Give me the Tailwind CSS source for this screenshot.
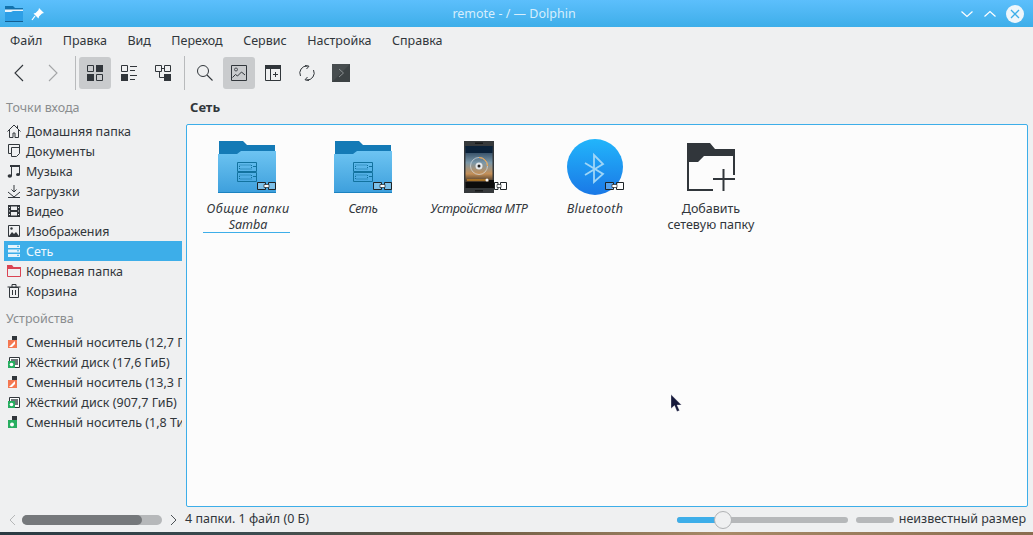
<!DOCTYPE html>
<html lang="ru">
<head>
<meta charset="utf-8">
<script src="https://cdn.jsdelivr.net/npm/@tailwindcss/browser@4"></script>
<title>remote - / — Dolphin</title>
</head>
<body class="w-[1033px] h-[535px] overflow-hidden bg-[#eff0f1] font-['Noto_Sans',sans-serif] text-[12.5px] text-[#31363b]">
<div class="relative flex flex-col h-[532px] bg-[#eff0f1]">
  <!-- title bar -->
  <div class="relative flex items-center h-[27px] bg-gradient-to-b from-[#5cbffc] to-[#3daee9]">
    <svg class="ml-[4px]" width="20" height="18" viewBox="0 0 20 18"><path d="M1 1h8l2 2h8v13H1z" fill="#1272ad"/><path d="M1 4.500h18V7H1z" fill="#e8f4fc"/><path d="M1 7h6l2-1h10v11H1z" fill="#2d9fe6"/><path d="M1 16h18v1H1z" fill="#135f92"/></svg>
    <svg class="ml-[7px]" width="14" height="14" viewBox="0 0 14 14"><path d="M8 1l5 5-2 .5L8 9.500l-.5 2-5-5 2-.5L7.500 3z" fill="#fff"/><path d="M4 9l-3 4" stroke="#fff" stroke-width="1.200"/></svg>
    <span class="absolute left-0 right-[5px] text-center text-[#d6eefc] leading-[27px]">remote - / — Dolphin</span>
    <div class="ml-auto flex items-center gap-[9px] mr-[9px]">
      <svg width="14" height="10" viewBox="0 0 14 10"><path d="M1.500 2.500L7 7.500l5.500-5" fill="none" stroke="#fff" stroke-width="1.200"/></svg>
      <svg width="14" height="10" viewBox="0 0 14 10"><path d="M1.500 7.500L7 2.500l5.500 5" fill="none" stroke="#fff" stroke-width="1.200"/></svg>
      <svg width="18" height="18" viewBox="0 0 18 18"><circle cx="9" cy="9" r="9" fill="#eef6fb"/><path d="M5 5l8 8M13 5l-8 8" stroke="#3daee9" stroke-width="1.300"/></svg>
    </div>
  </div>
  <!-- menu -->
  <div class="flex items-center gap-[20.5px] h-[27px] pl-[10px] leading-[27px]">
    <span>Файл</span><span>Правка</span><span>Вид</span><span>Переход</span><span>Сервис</span><span>Настройка</span><span>Справка</span>
  </div>
  <!-- toolbar -->
  <div class="flex items-start gap-[2px] h-[39px] pl-[3px] pt-[3px]">
    <div class="w-8 h-8 flex items-center justify-center"><svg width="12" height="18" viewBox="0 0 12 18"><path d="M10 1L2 9l8 8" fill="none" stroke="#31363b" stroke-width="1.100"/></svg></div>
    <div class="w-8 h-8 flex items-center justify-center"><svg width="12" height="18" viewBox="0 0 12 18"><path d="M2 1l8 8-8 8" fill="none" stroke="#a3a5a7" stroke-width="1.100"/></svg></div>
    <div class="w-px h-[34px] -mt-px bg-[#b8babc] ml-[4px] mr-[1px]"></div>
    <div class="w-8 h-8 flex items-center justify-center bg-[#c9cbcd] rounded-[3px]"><svg width="16" height="16" viewBox="0 0 16 16"><path d="M.500.500h6v6h-6zM9.500 9.500h6v6h-6z" fill="none" stroke="#31363b"/><path d="M9 0h7v7H9zM0 9h7v7H0z" fill="#31363b"/></svg></div>
    <div class="w-8 h-8 flex items-center justify-center"><svg width="16" height="16" viewBox="0 0 16 16"><path d="M.500.500h6v6h-6z" fill="none" stroke="#31363b"/><path d="M0 9h7v7H0z" fill="#31363b"/><path d="M9 1h7v1H9zM9 5h5v1H9zM9 10h7v1H9zM9 14h5v1H9z" fill="#31363b"/></svg></div>
    <div class="w-8 h-8 flex items-center justify-center"><svg width="16" height="16" viewBox="0 0 16 16"><path d="M.500.500h6v6h-6zM9.500.500h6v6h-6z" fill="none" stroke="#31363b"/><path d="M9 9h7v7H9z" fill="#31363b"/><path d="M7 3.500h2.500M4.500 7v5.500H9" fill="none" stroke="#31363b"/></svg></div>
    <div class="w-px h-[34px] -mt-px bg-[#b8babc] ml-[3px] mr-[2px]"></div>
    <div class="w-8 h-8 flex items-center justify-center"><svg width="16" height="16" viewBox="0 0 16 16"><circle cx="6" cy="6" r="5.500" fill="none" stroke="#31363b"/><path d="M10 10l5.500 5.500" stroke="#31363b" stroke-width="1.100"/></svg></div>
    <div class="w-8 h-8 flex items-center justify-center bg-[#c9cbcd] rounded-[3px]"><svg width="16" height="16" viewBox="0 0 16 16"><path d="M.500.500h15v15H.500z" fill="none" stroke="#31363b"/><circle cx="5" cy="4.500" r="1.500" fill="none" stroke="#31363b" stroke-width=".8"/><path d="M1.500 12.500l3-3 2 1.500 4-4 3.500 3" fill="none" stroke="#31363b"/></svg></div>
    <div class="w-8 h-8 flex items-center justify-center"><svg width="16" height="16" viewBox="0 0 16 16"><path d="M0 0h16v4H0z" fill="#31363b"/><path d="M.500.500h15v15H.500zM5.500 4v12" fill="none" stroke="#31363b"/><path d="M8 9.500h5M10.500 7v5" stroke="#31363b"/></svg></div>
    <div class="w-8 h-8 flex items-center justify-center"><svg width="16" height="16" viewBox="0 0 16 16"><path d="M1.500 11A7 7 0 0 1 8.500 1M6 .5L10 1.200 7.500 4M14.500 5A7 7 0 0 1 7.500 15M10 15.500L6 14.800 8.500 12" fill="none" stroke="#31363b"/></svg></div>
    <div class="w-8 h-8 flex items-center justify-center"><svg width="18" height="18" viewBox="0 0 18 18"><path d="M0 0h18v18H0z" fill="#3c4244"/><path d="M0 0h18L0 18z" fill="#474d4f"/><path d="M7 5l4.500 4L7 13" fill="none" stroke="#8b9092"/></svg></div>
  </div>
  <!-- content -->
  <div class="flex flex-1 min-h-0">
    <aside class="w-[186px] shrink-0 pl-[4px] pr-[4px] pt-[4px] overflow-hidden">
      <div class="h-5 pl-[2px] pt-[1px] leading-5 text-[#8a8d8f] mb-[4px]">Точки входа</div>
      <div class="flex items-center h-5 pl-[3px] whitespace-nowrap overflow-hidden"><svg class="shrink-0 mr-[5px]" width="14" height="14" viewBox="0 0 14 14"><path d="M.5 7.500L7 1l6.500 6.500M2.500 6v7.500h3.500V9h2v4.500h3.500V6M10.500 1.500v2.500" fill="none" stroke="#31363b"/></svg><span class="pt-[2px]">Домашняя папка</span></div>
      <div class="flex items-center h-5 pl-[3px] whitespace-nowrap overflow-hidden"><svg class="shrink-0 mr-[5px]" width="14" height="14" viewBox="0 0 14 14"><path d="M1.500.500h11v9l-3 3h-5v-3h-3zM4.500 3.500h8M4.500 3.500v6" fill="none" stroke="#31363b"/></svg><span class="pt-[2px]">Документы</span></div>
      <div class="flex items-center h-5 pl-[3px] whitespace-nowrap overflow-hidden"><svg class="shrink-0 mr-[5px]" width="14" height="14" viewBox="0 0 14 14"><path d="M3 1h10v2H5v9H4V3H3z M12 3h1v8h-1z" fill="#31363b"/><ellipse cx="2.800" cy="12" rx="2.200" ry="1.700" fill="#31363b"/><ellipse cx="11" cy="10.500" rx="2" ry="1.500" fill="#31363b"/></svg><span class="pt-[2px]">Музыка</span></div>
      <div class="flex items-center h-5 pl-[3px] whitespace-nowrap overflow-hidden"><svg class="shrink-0 mr-[5px]" width="14" height="14" viewBox="0 0 14 14"><path d="M7 1v7M4.500 5.500L7 8l2.500-2.500M1 8l6 5 6-5" fill="none" stroke="#31363b"/><path d="M1 13.500h12" stroke="#31363b"/></svg><span class="pt-[2px]">Загрузки</span></div>
      <div class="flex items-center h-5 pl-[3px] whitespace-nowrap overflow-hidden"><svg class="shrink-0 mr-[5px]" width="14" height="14" viewBox="0 0 14 14"><path d="M1 1h12v12H1z" fill="#31363b"/><path d="M4 2.500h6v3.500H4zM4 8h6v3.500H4z" fill="#eff0f1"/><path d="M2 3h1v1H2zM2 6.500h1v1H2zM2 10h1v1H2zM11 3h1v1h-1zM11 6.500h1v1h-1zM11 10h1v1h-1z" fill="#eff0f1"/></svg><span class="pt-[2px]">Видео</span></div>
      <div class="flex items-center h-5 pl-[3px] whitespace-nowrap overflow-hidden"><svg class="shrink-0 mr-[5px]" width="14" height="14" viewBox="0 0 14 14"><path d="M1.500 1.500h11v11h-11z" fill="none" stroke="#31363b"/><circle cx="4.500" cy="4.500" r="1.200" fill="#31363b"/><path d="M2 12l3-4 2 2 2-2 3 4z" fill="#31363b"/></svg><span class="pt-[2px]">Изображения</span></div>
      <div class="flex items-center h-5 pl-[3px] whitespace-nowrap overflow-hidden bg-[#3daee9] text-[#eff8fd]"><svg class="shrink-0 mr-[5px]" width="14" height="14" viewBox="0 0 14 14"><path d="M1 1h12v3H1zM1 5.500h12v3H1zM1 10h12v3H1z" fill="#e6f4fc"/><path d="M10 2.300h2M10 6.800h2M10 11.300h2" stroke="#3daee9"/></svg><span class="pt-[2px]">Сеть</span></div>
      <div class="flex items-center h-5 pl-[3px] whitespace-nowrap overflow-hidden"><svg class="shrink-0 mr-[5px]" width="14" height="14" viewBox="0 0 14 14"><path d="M.5 4.500h13v8H.5z" fill="none" stroke="#da4453"/><path d="M0 1h5l1.500 2H14v2H0z" fill="#da4453"/></svg><span class="pt-[2px]">Корневая папка</span></div>
      <div class="flex items-center h-5 pl-[3px] whitespace-nowrap overflow-hidden"><svg class="shrink-0 mr-[5px]" width="14" height="14" viewBox="0 0 14 14"><path d="M2.500 3.500h9v10h-9zM.5 3h13M5 3V.5h4V3M5.500 6v5M8.500 6v5" fill="none" stroke="#31363b"/></svg><span class="pt-[2px]">Корзина</span></div>
      <div class="h-5 pl-[2px] pt-[1px] leading-5 text-[#8a8d8f] mt-[7px] mb-[4px]">Устройства</div>
      <div class="flex items-center h-5 pl-[3px] whitespace-nowrap overflow-hidden"><svg class="shrink-0 mr-[5px]" width="14" height="14" viewBox="0 0 14 14"><path d="M5 1h5v5H5z" fill="#31363b"/><path d="M1 5h9v8H1z" fill="#f47750"/><path d="M2 12l6-6v3l-3 3z" fill="#fff"/></svg><span class="pt-[2px]">Сменный носитель (12,7 ГиБ)</span></div>
      <div class="flex items-center h-5 pl-[3px] whitespace-nowrap overflow-hidden"><svg class="shrink-0 mr-[5px]" width="14" height="14" viewBox="0 0 14 14"><path d="M2.500 2.500h10v10h-10z" fill="#fff" stroke="#31363b"/><path d="M4 4h7v6H4z" fill="#6e7679"/><path d="M1 6h7v7H1z" fill="#27ae60"/><circle cx="4.500" cy="9.500" r="1.800" fill="#fff"/></svg><span class="pt-[2px]">Жёсткий диск (17,6 ГиБ)</span></div>
      <div class="flex items-center h-5 pl-[3px] whitespace-nowrap overflow-hidden"><svg class="shrink-0 mr-[5px]" width="14" height="14" viewBox="0 0 14 14"><path d="M5 1h5v5H5z" fill="#31363b"/><path d="M1 5h9v8H1z" fill="#f47750"/><path d="M2 12l6-6v3l-3 3z" fill="#fff"/></svg><span class="pt-[2px]">Сменный носитель (13,3 ГиБ)</span></div>
      <div class="flex items-center h-5 pl-[3px] whitespace-nowrap overflow-hidden"><svg class="shrink-0 mr-[5px]" width="14" height="14" viewBox="0 0 14 14"><path d="M2.500 2.500h10v10h-10z" fill="#fff" stroke="#31363b"/><path d="M4 4h7v6H4z" fill="#6e7679"/><path d="M1 6h7v7H1z" fill="#27ae60"/><circle cx="4.500" cy="9.500" r="1.800" fill="#fff"/></svg><span class="pt-[2px]">Жёсткий диск (907,7 ГиБ)</span></div>
      <div class="flex items-center h-5 pl-[3px] whitespace-nowrap overflow-hidden"><svg class="shrink-0 mr-[5px]" width="14" height="14" viewBox="0 0 14 14"><path d="M5 1h5v5H5z" fill="#31363b"/><path d="M1 5h9v8H1z" fill="#27ae60"/><circle cx="5" cy="9.500" r="2" fill="#fff"/></svg><span class="pt-[2px]">Сменный носитель (1,8 ТиБ)</span></div>
    </aside>
    <main class="flex-1 flex flex-col min-w-0 pr-[5px]">
      <div class="h-[31px] pl-[4px] pt-[4px] leading-5 font-bold text-[13px]">Сеть</div>
      <div class="flex-1 flex items-start pt-[14px] pl-[2px] border border-[#3daee9] rounded-[2px] bg-[#fcfcfc]">
        <!-- item -->
        <div class="w-[116px] flex flex-col items-center italic">
          <div class="h-14 w-full flex items-center justify-center">
            <svg width="58" height="52" viewBox="0 0 58 52"><defs><linearGradient id="f1" x1="0" y1="0" x2="0" y2="1"><stop offset="0" stop-color="#6dc4f2"/><stop offset="1" stop-color="#3d9fdc"/></linearGradient></defs><path d="M1 0h24l4 4h28v12H1z" fill="#147ab6"/><path d="M0 13h19l4-3h35v42H0z" fill="url(#f1)"/><path d="M0 51h58v1H0z" fill="#1b82c0"/><path d="M19.500 21.500h19v9h-19zM19.500 31.500h19v9h-19z" fill="none" stroke="#12729f"/><path d="M21.500 24h12v4h-12zM21.500 34h12v4h-12z" fill="none" stroke="#12729f" stroke-dasharray="1 1"/><path d="M35 25h3v1h-3zM35 35h3v1h-3z" fill="#12729f"/><path d="M39.500 41.500h8v7h-8zM50.500 41.500h7v7h-7z" fill="#fff" fill-opacity=".3" stroke="#1d2326"/><path d="M46 43.500h5v3h-5z" fill="#fff" stroke="#1d2326" stroke-width=".7"/></svg>
          </div>
          <div class="mt-[6px] mr-[2px] pl-[4px] w-[87px] h-8 text-center leading-4 border-b border-[#3daee9]"><span class="block tracking-[0.5px] whitespace-nowrap">Общие папки</span><span class="block">Samba</span></div>
        </div>
        <div class="w-[116px] flex flex-col items-center italic">
          <div class="h-14 w-full flex items-center justify-center">
            <svg width="58" height="52" viewBox="0 0 58 52"><path d="M1 0h24l4 4h28v12H1z" fill="#147ab6"/><path d="M0 13h19l4-3h35v42H0z" fill="url(#f1)"/><path d="M0 51h58v1H0z" fill="#1b82c0"/><path d="M19.500 21.500h19v9h-19zM19.500 31.500h19v9h-19z" fill="none" stroke="#12729f"/><path d="M21.500 24h12v4h-12zM21.500 34h12v4h-12z" fill="none" stroke="#12729f" stroke-dasharray="1 1"/><path d="M35 25h3v1h-3zM35 35h3v1h-3z" fill="#12729f"/><path d="M39.500 41.500h8v7h-8zM50.500 41.500h7v7h-7z" fill="#fff" fill-opacity=".3" stroke="#1d2326"/><path d="M46 43.500h5v3h-5z" fill="#fff" stroke="#1d2326" stroke-width=".7"/></svg>
          </div>
          <div class="mt-[6px] text-center leading-4 tracking-[-0.4px]">Сеть</div>
        </div>
        <div class="w-[116px] flex flex-col items-center italic">
          <div class="h-14 w-full flex items-center justify-center pl-[13px]">
            <svg width="43" height="52" viewBox="0 0 43 52"><defs><linearGradient id="s" x1="0" y1="0" x2="0" y2="1"><stop offset="0" stop-color="#0d2440"/><stop offset=".45" stop-color="#7a97a8"/><stop offset=".75" stop-color="#c59058"/><stop offset="1" stop-color="#2c2620"/></linearGradient></defs><path d="M0 0h30v52H0z" fill="#36393b"/><path d="M11 1.500h8v1.500h-8zM11 49h8v1.500h-8z" fill="#17191a"/><path d="M1.500 5h27v37h-27z" fill="url(#s)"/><path d="M1.500 41h27v6h-27z" fill="#0c0c0c"/><path d="M1.500 5h27v7h-27z" fill="#0a2139"/><circle cx="15" cy="25" r="8.500" fill="none" stroke="#d7dde0" stroke-opacity=".7" stroke-width="1"/><path d="M15 16.500a8.500 8.500 0 0 1 8.500 8.500" fill="none" stroke="#f0a040"/><circle cx="15" cy="25" r="3.500" fill="#e6eaec"/><circle cx="15" cy="25" r="1.500" fill="#222"/><path d="M3 38.500h20v1H3z" fill="#f39c1f"/><circle cx="23" cy="39" r="1.500" fill="#fff"/><path d="M25 39h5v8h-5z" fill="#0c0c0c"/><path d="M30.500 41.500h3.500v7h-3.500zM36.500 41.500h6v7h-6z" fill="#fff" stroke="#1d2326"/><path d="M33 43.500h4v3h-4z" fill="#fff" stroke="#1d2326" stroke-width=".7"/></svg>
          </div>
          <div class="mt-[6px] text-center leading-4 tracking-[-0.35px]">Устройства MTP</div>
        </div>
        <div class="w-[116px] flex flex-col items-center italic">
          <div class="h-14 w-full flex items-center justify-center pl-[2px]">
            <svg width="58" height="56" viewBox="0 0 58 56"><defs><linearGradient id="b" x1="0" y1="0" x2="0" y2="1"><stop offset="0" stop-color="#22b5fb"/><stop offset="1" stop-color="#1a78e6"/></linearGradient></defs><circle cx="28" cy="28" r="28" fill="url(#b)"/><path d="M18 24L36 35l-9 8V16l9 9-18 11" fill="none" stroke="#9fd6f7" stroke-width="1.800"/><path d="M38.500 43.500h8v7h-8zM49.500 43.500h7v7h-7z" fill="#fff" fill-opacity=".25" stroke="#1d2326"/><path d="M45 45.500h5v3h-5z" fill="#fff" stroke="#1d2326" stroke-width=".7"/></svg>
          </div>
          <div class="mt-[6px] text-center leading-4 tracking-[0.3px]">Bluetooth</div>
        </div>
        <div class="w-[116px] flex flex-col items-center">
          <div class="h-14 w-full flex items-center justify-center">
            <svg width="48" height="48" viewBox="0 0 48 48"><path d="M0 0H23L28 6H48V32H46V13H17L11 19H2V46H26V48H0Z" fill="#31363b"/><path d="M26 35h22v2H26zM35.500 26h2v22h-2z" fill="#31363b"/></svg>
          </div>
          <div class="mt-[6px] text-center leading-4 w-[100px]">Добавить сетевую папку</div>
        </div>
      </div>
    </main>
  </div>
  <!-- bottom row -->
  <div class="flex items-center h-[25px] shrink-0">
    <div class="w-[186px] shrink-0 flex items-center h-full">
      <svg class="ml-[8px]" width="9" height="12" viewBox="0 0 9 12"><path d="M7 1L2 6l5 5" fill="none" stroke="#b5b7b8"/></svg>
      <div class="ml-[5px] w-[140px] h-[10px] rounded-full bg-[#b6b8ba]"><div class="w-[120px] h-full rounded-full bg-[#75787b]"></div></div>
      <svg class="ml-[7px]" width="9" height="12" viewBox="0 0 9 12"><path d="M2 1l5 5-5 5" fill="none" stroke="#4d5256"/></svg>
    </div>
    <span class="-ml-[1px] -mt-[1px]">4 папки. 1 файл (0 Б)</span>
    <div class="ml-auto relative w-[171px] h-[6px] rounded-full bg-[#b6b8ba]">
      <div class="w-[46px] h-full rounded-full bg-[#3daee9]"></div>
      <div class="absolute left-[37px] top-[-6px] w-[18px] h-[18px] rounded-full bg-[#eff0f1] border border-[#b0b2b4]"></div>
    </div>
    <div class="ml-[8px] w-[38px] h-[6px] rounded-full bg-[#b6b8ba]"></div>
    <span class="ml-[5px] mr-[7px] -mt-[1px]">неизвестный размер</span>
  </div>
  <!-- mouse cursor -->
  <svg class="absolute left-[670px] top-[394px]" width="12" height="20" viewBox="0 0 12 20"><path d="M1 .5v14l3.500-3 2.500 6 2.500-1-2.500-5.500h4.500z" fill="#16193b" stroke="#fff" stroke-opacity=".5" stroke-width=".6"/></svg>
</div>
<div class="h-[3px] bg-[linear-gradient(90deg,#2a3a42_0%,#3d4c50_25%,#6d5b43_45%,#a88a68_70%,#8a6d50_100%)]"></div>
</body>
</html>
